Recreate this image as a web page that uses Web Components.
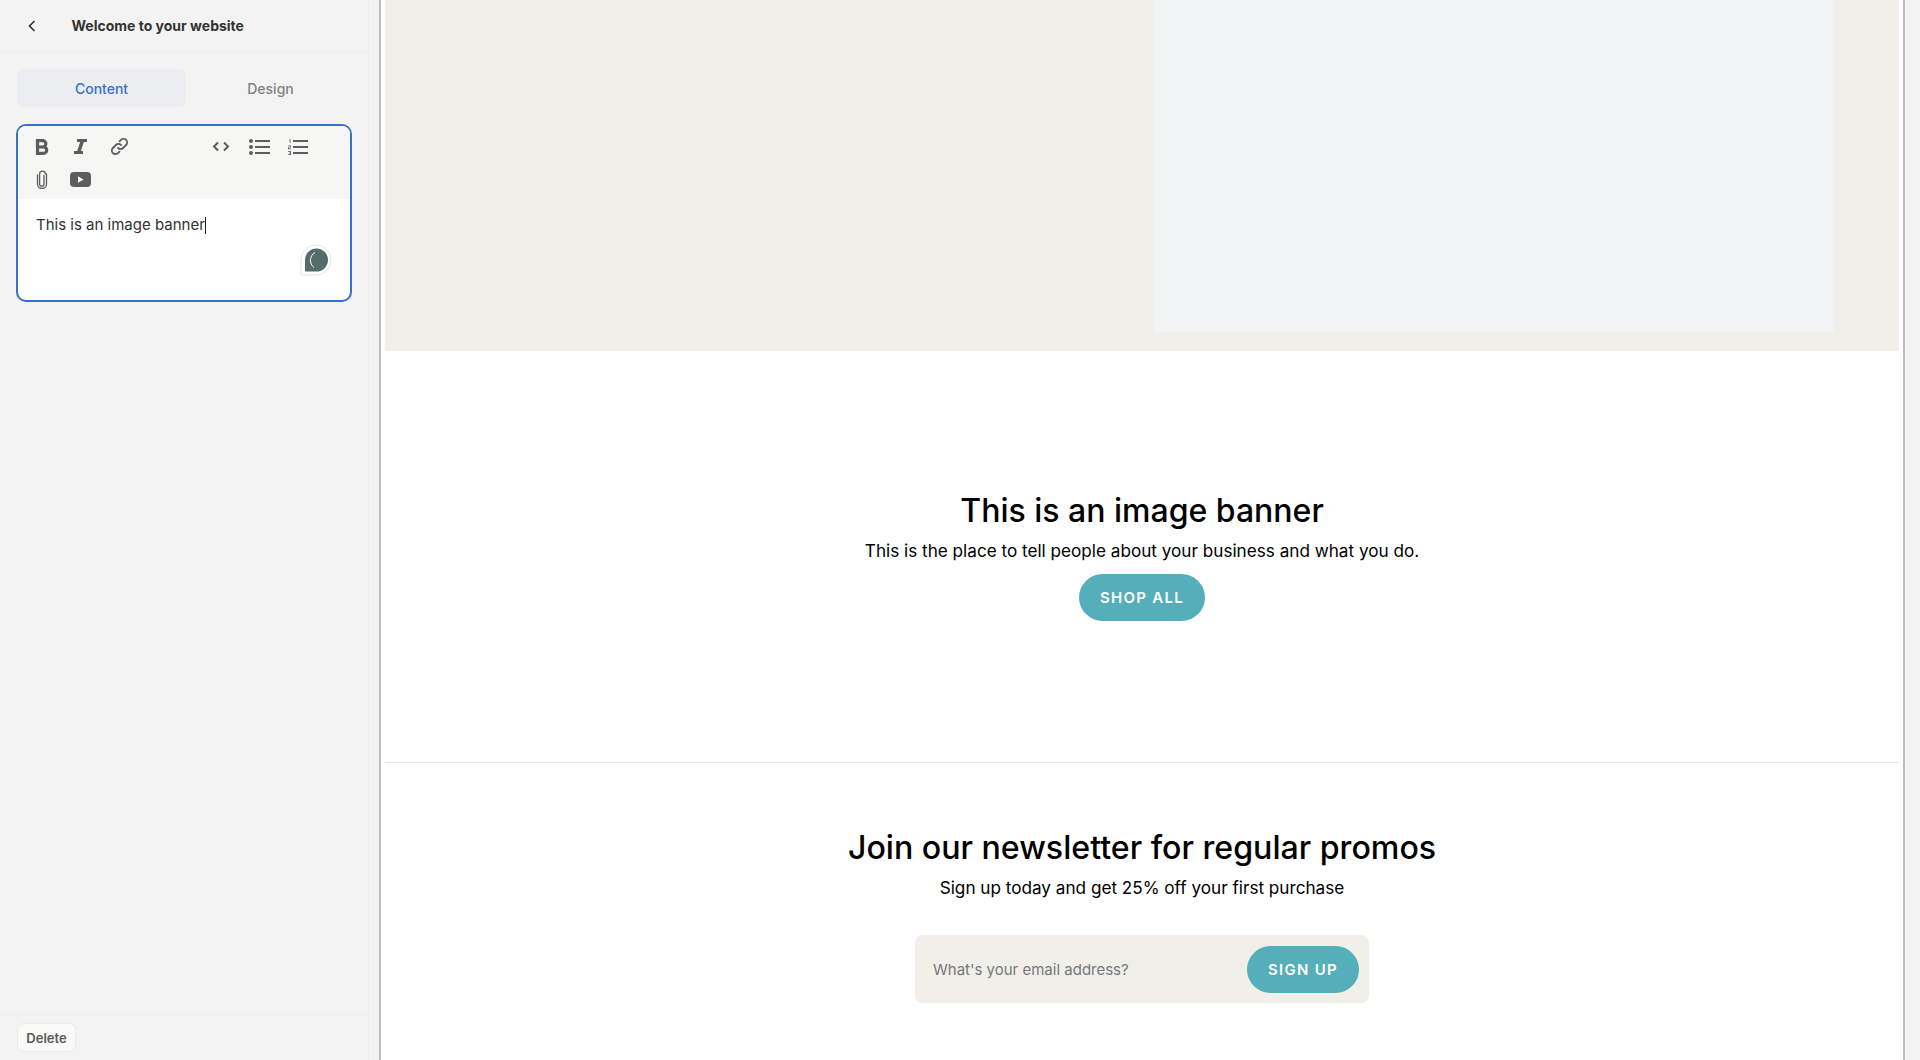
<!doctype html>
<html><head><meta charset="utf-8"><style>
html,body{margin:0;height:1060px;overflow:hidden;background:#f3f3f3}
body{font-family:Inter,"Liberation Sans",sans-serif}
</style></head><body>
<app-shell></app-shell>
<script>
const def=(n,css,html)=>customElements.define(n,class extends HTMLElement{constructor(){super();this.attachShadow({mode:'open'}).innerHTML=`<style>${css}</style>${html}`}});
def('rich-editor',`:host{display:block;margin:17px 0 0 16px;width:336px;height:178px;box-sizing:border-box;border:2px solid #3a6fca;border-radius:10px;background:#fff;overflow:hidden;position:relative}
.bar{background:#f6f6f4;height:73px;box-sizing:border-box;padding:4px 0 0 5px;display:grid;grid-template-columns:38.5px 38.5px 38.5px 63px 38.5px 38.5px 38.5px;grid-auto-rows:33px}
.txt{font-size:15px;line-height:20px;color:#303333;padding:16px 0 0 18px;display:flex}
.caret{display:inline-block;width:1px;height:17px;background:#222;margin:2px 0 0 0}
.bubble{position:absolute;left:282px;top:118px}
svg{display:block}.c{display:flex;align-items:center;justify-content:center}.n{grid-column:1}`,
`<div class="bar">
<div class="c"><svg width="14" height="16" viewBox="0 0 14 16" fill="none" stroke="#5a5f5e" stroke-width="3.200"><path d="M2.500 0v16M2.500 1.700h5.200a3 3 0 0 1 0 6.300H2.500M2.500 8h6a3.200 3.200 0 0 1 0 6.400h-6"/></svg></div>
<div class="c"><svg width="15" height="15" viewBox="0 0 15 15" fill="none" stroke="#5a5f5e" stroke-width="2.800"><path d="M4 1.500h10M1 13.500h9M9.500 1.500 5.500 13.500" /><path d="M9.500 1.500 5.500 13.500" stroke-width="3.400"/></svg></div>
<div class="c"><svg width="19" height="19" viewBox="0 0 19 19" fill="none" stroke="#5a5f5e" stroke-width="1.800" stroke-linecap="round"><path d="M8 11a3.600 3.600 0 0 0 5.100 0l3-3a3.600 3.600 0 0 0-5.100-5.100L9.500 4.400"/><path d="M11 8a3.600 3.600 0 0 0-5.100 0l-3 3a3.600 3.600 0 0 0 5.100 5.100l1.500-1.500"/></svg></div>
<div></div>
<div class="c"><svg width="18" height="11" viewBox="0 0 18 11" fill="none" stroke="#5a5f5e" stroke-width="2"><path d="M6 1.500 2 5.500l4 4M12 1.500l4 4-4 4"/></svg></div>
<div class="c"><svg width="21" height="16" viewBox="0 0 21 16"><g fill="#5a5f5e"><circle cx="2" cy="2" r="2"/><circle cx="2" cy="8" r="2"/><circle cx="2" cy="14" r="2"/><rect x="6" y="1" width="15" height="2"/><rect x="6" y="7" width="15" height="2"/><rect x="6" y="13" width="15" height="2"/></g></svg></div>
<div class="c"><svg width="20" height="16" viewBox="0 0 20 16"><g fill="#5a5f5e"><rect x="5" y="1" width="15" height="2"/><rect x="5" y="7" width="15" height="2"/><rect x="5" y="13" width="15" height="2"/><path d="M1 .5h1.500V4H1.700V1.300H1zM0 6.500h3v2H1v1h2v.7H0v-2h2v-1H0zM0 12h3v4H0v-.7h2.200v-.9H1v-.6h1.200v-1.100H0z"/></g></svg></div>
<div class="c n"><svg width="12" height="19" viewBox="0 0 12 19" fill="none" stroke="#5a5f5e" stroke-width="1.300" stroke-linecap="round"><path d="M8 5.500v8.500a2.200 2.200 0 0 1-4.400 0V4a2.900 2.900 0 0 1 5.800 0v0"/><path d="M1.500 5v9a4.500 4.500 0 0 0 9 0V4"/></svg></div>
<div class="c"><svg width="21" height="15" viewBox="0 0 21 15"><rect width="21" height="15" rx="4" fill="#5a5f5e"/><path d="M8 4.200v6.600l5.500-3.300z" fill="#fff"/></svg></div>
</div>
<div class="txt"><span>This is an image banner</span><i class="caret"></i></div>
<svg class="bubble" width="32" height="32" viewBox="0 0 32 32"><path d="M1 16a15 15 0 1 1 15 15H1z" fill="#fff" stroke="#e2e3e3"/><path d="M5 16a11.500 11.500 0 1 1 11.500 11.500H5z" fill="#546d69"/><path d="M15 8.500a9 9 0 0 0-1 15" fill="none" stroke="#fff" stroke-width="1"/></svg>`);
def('side-panel',`:host{display:flex;flex-direction:column;width:369px;height:1060px;box-sizing:border-box;background:#f3f3f3;border-right:1px solid #eeeeee}
.head{height:52px;box-sizing:border-box;border-bottom:1px solid #eeeeee;display:flex;align-items:center;padding-left:27px;font-size:14px;font-weight:700;color:#333}
.head span{margin-left:34.500px}
.tabs{display:flex;margin:17px 0 0 17px;width:338px}
.tab{flex:1;height:38px;display:flex;align-items:center;justify-content:center;font-size:14px;font-weight:500;color:#808282;border-radius:8px}
.on{background:#ebedf1;color:#3a6fca}
.sp{flex:1}
.foot{height:46px;box-sizing:border-box;border-top:1px solid #eeeeee;padding:8px 0 0 17px}
button{font:600 13px Inter,"Liberation Sans",sans-serif;color:#5a5a5a;width:59px;height:29px;padding:0;background:#f9f9f8;border:1px solid #e9e9e8;border-radius:7px;display:block}`,
`<div class="head"><svg width="10" height="12" viewBox="0 0 10 12" fill="none" stroke="#303333" stroke-width="1.600"><path d="M7.500 1 2.500 6l5 5"/></svg><span>Welcome to your website</span></div>
<div class="tabs"><div class="tab on">Content</div><div class="tab">Design</div></div>
<rich-editor></rich-editor><div class="sp"></div>
<div class="foot"><button>Delete</button></div>`);
def('hero-banner',`:host{display:block;height:351px;background:#f0efea;box-sizing:border-box;padding-left:769px}
div{width:680px;height:332px;background:#f2f3f5}`,'<div></div>');
def('pill-button',`:host{display:inline-flex;align-items:center;justify-content:center;background:#54afba;color:#fff;border-radius:24px;height:47px;box-sizing:border-box;font-size:15px;font-weight:600;letter-spacing:1.250px;white-space:nowrap}`,'<slot></slot>');
def('banner-copy',`:host{display:block;height:412px;box-sizing:border-box;padding-top:140px;text-align:center;color:#000;border-bottom:1px solid #e6e6e4}
h2{font-size:32px;line-height:40px;font-weight:500;margin:0}
p{font-size:17.150px;line-height:24px;margin:8px 0 0}
pill-button{width:126px;margin-top:11px}`,`<h2>This is an image banner</h2><p>This is the place to tell people about your business and what you do.</p><pill-button>SHOP ALL</pill-button>`);
def('news-letter',`:host{display:block;padding-top:65px;text-align:center;color:#000}
h2{font-size:32.150px;line-height:40px;font-weight:500;margin:0}
p{font-size:17.150px;line-height:24px;margin:8px 0 0}
.f{margin:35px auto 0;width:454px;height:68px;box-sizing:border-box;background:#f0efea;border-radius:8px;display:flex;align-items:center;justify-content:space-between;padding:0 10px 0 18px;font-size:15px;color:#76787a}
pill-button{width:112px}`,`<h2>Join our newsletter for regular promos</h2><p>Sign up today and get 25% off your first purchase</p><div class="f"><span>What's your email address?</span><pill-button>SIGN UP</pill-button></div>`);
def('site-preview',`:host{display:block;width:1526px;height:1060px;box-sizing:border-box;background:#fff;padding:0 4px;border-left:2px solid #bdbdbd;border-right:2px solid #bdbdbd;margin-left:10px;overflow:hidden}`,'<hero-banner></hero-banner><banner-copy></banner-copy><news-letter></news-letter>');
def('app-shell',`:host{display:flex;width:1920px;height:1060px;background:#f3f3f3}`,'<side-panel></side-panel><site-preview></site-preview>');
</script></body></html>
